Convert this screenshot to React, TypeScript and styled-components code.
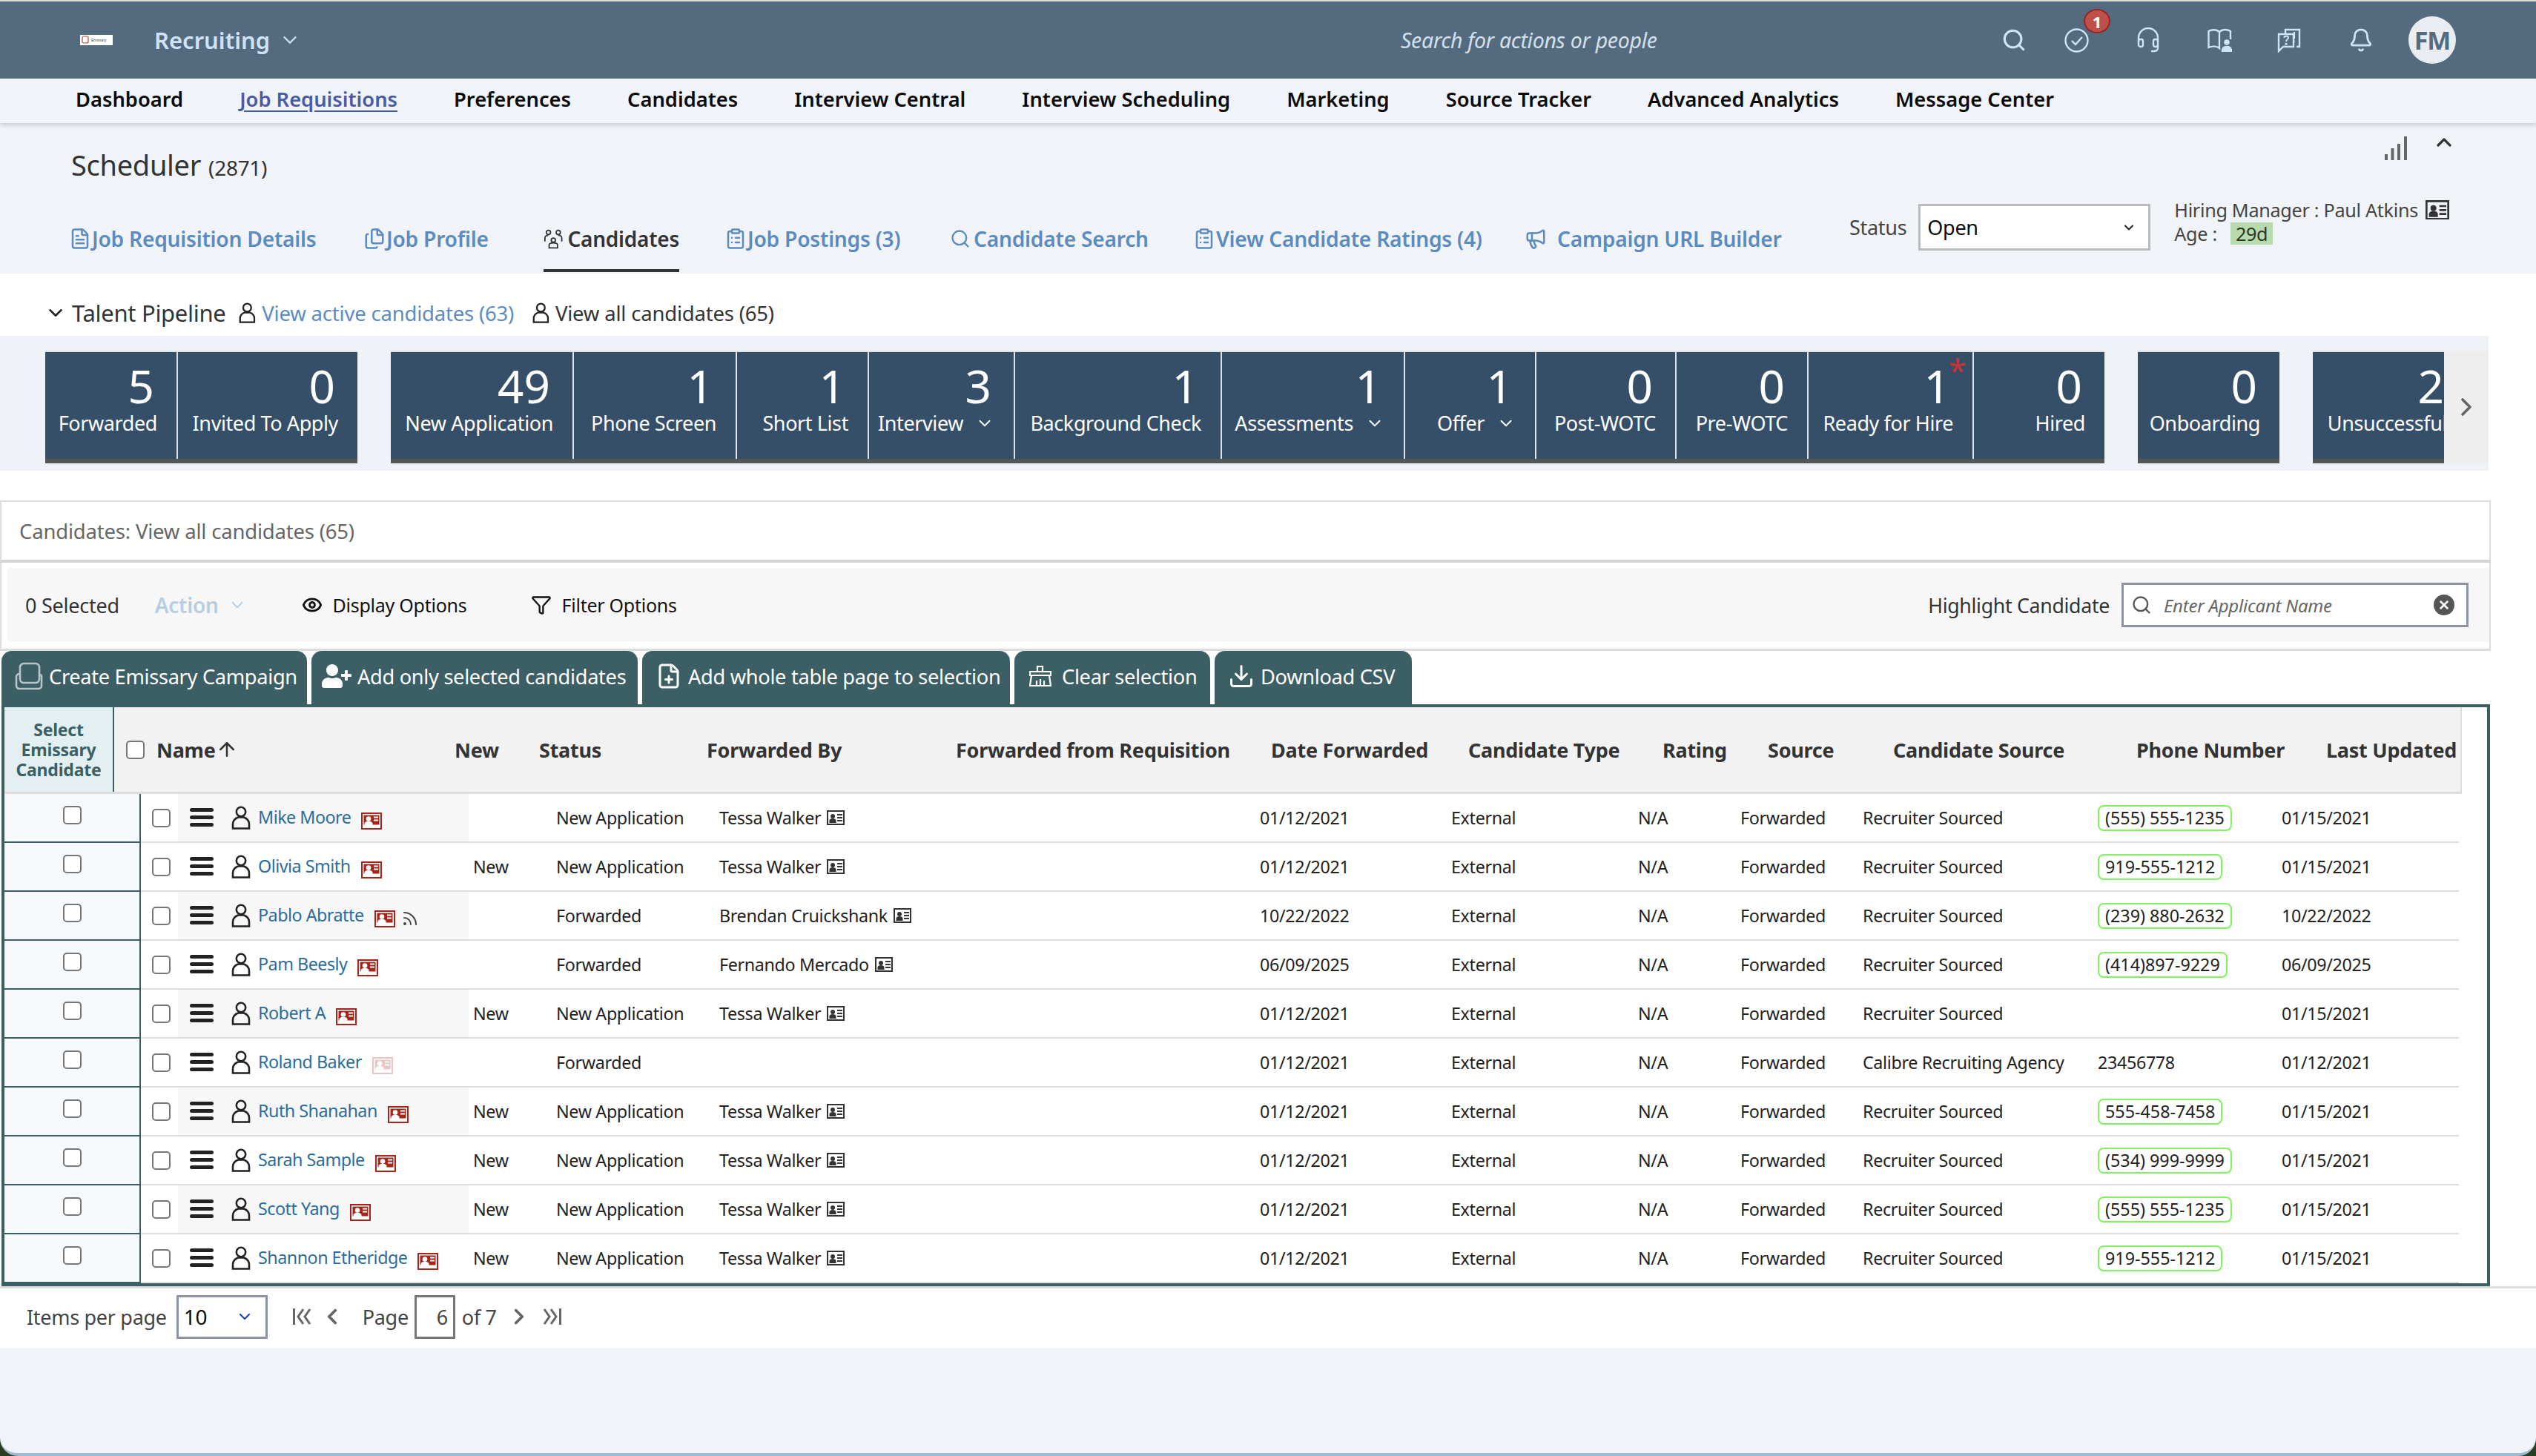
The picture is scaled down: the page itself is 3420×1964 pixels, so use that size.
import React from "react";
import styled, { createGlobalStyle } from "styled-components";
import {
  Search,
  ChevronDown,
  ChevronUp,
  ChevronRight,
  ChevronLeft,
  Bell,
  FileText,
  Files,
  ClipboardList,
  Megaphone,
  Eye,
  Filter,
  Download,
  FilePlus,
  Rss,
  ArrowUp,
  X,
} from "lucide-react";
import { FaUserPlus } from "react-icons/fa";

const FONT = `"Noto Sans", "Open Sans", Arial, sans-serif`;

const GlobalStyle = createGlobalStyle`
  html, body { margin: 0; padding: 0; background: #2c3d22; }
  * { box-sizing: border-box; }
  body { font-family: ${FONT}; }
`;

const Page = styled.div`
  width: 3420px;
  height: 1964px;
  display: flex;
  flex-direction: column;
  background: #f0f3f8;
  border-top: 2px solid #dcdcd4;
  border-bottom: 4px solid #a0bbd3;
  border-radius: 0 0 24px 24px;
  overflow: hidden;
`;

const TopBar = styled.header`
  height: 104px;
  flex: none;
  background: #546a7f;
  display: flex;
  align-items: center;
  padding-left: 108px;
  color: #cfe3f7;
`;

const BrandGroup = styled.div`
  width: 1781px;
  flex: none;
  display: flex;
  align-items: center;
`;

const Logo = styled.svg`
  width: 44px;
  height: 14px;
  margin-right: 56px;
`;

const AppTitle = styled.div`
  font-size: 31px;
  font-weight: 600;
  color: #cfe3f7;
  margin-right: 12px;
`;

const SearchHint = styled.div`
  width: 785px;
  flex: none;
  font-size: 28.5px;
  font-style: italic;
  color: #d3e0ec;
  letter-spacing: -0.3px;
`;

const IconSlot = styled.div<{ $w: number }>`
  width: ${(p) => p.$w}px;
  height: 40px;
  flex: none;
  display: flex;
  align-items: center;
  justify-content: center;
  position: relative;
`;

const Badge = styled.span`
  position: absolute;
  left: 52px;
  top: -22px;
  width: 36px;
  height: 33px;
  border-radius: 50%;
  background: #bf4f4a;
  border: 2px solid #95271f;
  color: #fff;
  font-size: 22px;
  font-weight: 700;
  display: flex;
  align-items: center;
  justify-content: center;
`;

const Avatar = styled.div`
  width: 64px;
  height: 64px;
  border-radius: 50%;
  background: #e9edf1;
  color: #546a7f;
  font-size: 34px;
  font-weight: 700;
  letter-spacing: -1px;
  display: flex;
  align-items: center;
  justify-content: center;
  margin-left: 20px;
`;

const NavBar = styled.nav`
  height: 60px;
  flex: none;
  display: flex;
  align-items: center;
  gap: 76px;
  padding: 0 0 6px 102px;
  background: #f0f3f8;
  box-shadow: 0 3px 5px rgba(90, 100, 120, 0.25);
  position: relative;
`;

const NavLink = styled.a<{ $active?: boolean }>`
  font-size: 27.3px;
  font-weight: 600;
  color: ${(p) => (p.$active ? "#4a5ba6" : "#0a0a0a")};
  text-decoration: ${(p) => (p.$active ? "underline" : "none")};
  text-underline-offset: 5px;
`;

const PageHead = styled.section`
  height: 203px;
  flex: none;
  display: flex;
  flex-direction: column;
  background: #f0f3f8;
`;

const TitleRow = styled.div`
  height: 93px;
  flex: none;
  display: flex;
  justify-content: space-between;
  padding: 18px 108px 0 96px;
`;

const PageTitle = styled.h1`
  margin: 12px 0 0;
  font-size: 38px;
  font-weight: 400;
  color: #333;
  letter-spacing: -0.3px;
  display: flex;
  align-items: baseline;
  gap: 10px;
`;

const PageCount = styled.span`
  font-size: 28px;
`;

const HeadTools = styled.div`
  display: flex;
  gap: 34px;
  align-items: flex-start;
`;

const CollapseIcon = styled(ChevronUp)`
  margin-top: -8px;
`;

const TabsRow = styled.div`
  flex: 1;
  display: flex;
  align-items: flex-start;
  padding-left: 96px;
`;

const Tab = styled.a<{ $w: number; $gap?: number }>`
  width: ${(p) => p.$w}px;
  flex: none;
  height: 108px;
  display: flex;
  align-items: center;
  gap: ${(p) => p.$gap ?? 1}px;
  padding-top: 18px;
  font-size: 28.2px;
  font-weight: 600;
  letter-spacing: -0.25px;
  white-space: nowrap;
  color: #5b8bbf;
  & > svg {
    margin-left: -3px;
  }
`;

const ActiveTab = styled.div`
  width: 183px;
  height: 108px;
  flex: none;
  margin-right: 64px;
  display: flex;
  align-items: center;
  gap: 6px;
  padding-top: 22px;
  font-size: 28px;
  font-weight: 600;
  letter-spacing: -0.25px;
  color: #333;
  border-bottom: 4px solid #333;
`;

const StatusBlock = styled.div`
  display: flex;
  align-items: center;
  height: 63px;
  margin-top: 16px;
  gap: 16px;
  font-size: 27px;
  color: #444;
  letter-spacing: -0.3px;
`;

const StatusSelect = styled.div`
  width: 313px;
  height: 63px;
  background: #fff;
  border: 3px solid #bbb;
  display: flex;
  align-items: center;
  justify-content: space-between;
  padding: 0 16px 0 9px;
  font-size: 27px;
  color: #0a0a0a;
`;

const ManagerBlock = styled.div`
  margin: 8px 0 0 32px;
  display: flex;
  flex-direction: column;
  font-size: 25.2px;
  line-height: 32px;
  color: #444;
  letter-spacing: -0.3px;
`;

const ManagerLine = styled.div`
  display: flex;
  align-items: center;
  gap: 10px;
`;

const AgeTag = styled.span`
  background: #b9d9ae;
  padding: 0 7px;
  height: 30px;
  line-height: 30px;
  margin-left: 8px;
  color: #2b3a26;
`;

const Main = styled.main`
  flex: none;
  display: flex;
  flex-direction: column;
  background: #fff;
`;

const PipelineHead = styled.div`
  height: 84px;
  flex: none;
  display: flex;
  align-items: center;
  padding: 22px 0 0 60px;
  font-size: 27.5px;
  letter-spacing: -0.2px;
  color: #333;
`;

const PipelineTitle = styled.span`
  font-size: 31px;
  margin: 0 18px 0 7px;
  letter-spacing: -0.3px;
`;

const PipelineLink = styled.span<{ $link?: boolean }>`
  color: ${(p) => (p.$link ? "#5b8bbf" : "#333")};
  margin: 0 25px 0 8px;
`;

const PipelineStrip = styled.div`
  width: 3356px;
  height: 182px;
  flex: none;
  background: #eff2f7;
  padding-top: 20px;
  display: flex;
  align-items: flex-start;
`;

const TileScroller = styled.div`
  width: 3296px;
  height: 152px;
  flex: none;
  overflow: hidden;
  display: flex;
  padding-left: 61px;
  gap: 45px;
`;

const TileGroup = styled.div`
  display: flex;
  flex: none;
  height: 152px;
  background: #364f68;
  border-top: 2px solid #dfe3e8;
  border-bottom: 6px solid #555;
`;

const Tile = styled.div<{ $w: number }>`
  width: ${(p) => p.$w}px;
  flex: none;
  position: relative;
  padding: 12px 30px 0 0;
  color: #fff;
  text-align: right;
  border-left: 2px solid #dfe3e8;
  &:first-child {
    border-left: none;
  }
`;

const TileCount = styled.div`
  font-size: 62px;
  line-height: 67px;
`;

const TileLabel = styled.div`
  font-size: 27px;
  line-height: 34px;
  margin-right: -4px;
  letter-spacing: -0.4px;
  white-space: nowrap;
  display: flex;
  justify-content: flex-end;
  align-items: center;
  gap: 16px;
`;

const Asterisk = styled.span`
  position: absolute;
  right: 8px;
  top: 2px;
  color: #c9343a;
  font-size: 44px;
  line-height: 44px;
`;

const ScrollZone = styled.div`
  width: 60px;
  height: 152px;
  background: #eeeeee;
  display: flex;
  align-items: center;
  justify-content: center;
  color: #666;
`;

const ResultHead = styled.div`
  width: 3359px;
  height: 84px;
  margin-top: 40px;
  flex: none;
  display: flex;
  align-items: center;
  padding-left: 24px;
  background: #fff;
  border: 2px solid #ddd;
  border-bottom: 4px solid #d2d2d2;
  font-size: 27.5px;
  color: #666;
  letter-spacing: -0.2px;
`;

const ToolbarWrap = styled.div`
  width: 3359px;
  height: 119px;
  flex: none;
  padding: 7px 0 0 8px;
  border-left: 2px solid #ddd;
  border-right: 2px solid #ddd;
  border-bottom: 3px solid #ddd;
`;

const Toolbar = styled.div`
  height: 100px;
  background: #f7f7f7;
  display: flex;
  align-items: center;
  padding-left: 24px;
  font-size: 25px;
  letter-spacing: -0.25px;
  color: #111;
`;

const ToolbarCount = styled.span`
  color: #333;
  font-size: 27px;
  margin-right: 48px;
`;

const ActionLabel = styled.span`
  color: #b8cde0;
  font-size: 28px;
  font-weight: 600;
  margin-right: 12px;
`;

const ToolbarItem = styled.span<{ $ml: number }>`
  display: flex;
  align-items: center;
  gap: 14px;
  margin-left: ${(p) => p.$ml}px;
`;

const HighlightLabel = styled.span`
  margin-left: auto;
  font-size: 26.7px;
  color: #333;
  letter-spacing: -0.3px;
`;

const HighlightInput = styled.div`
  width: 468px;
  height: 60px;
  margin: 0 28px 0 16px;
  background: #fff;
  border: 3px solid #8a94a6;
  display: flex;
  align-items: center;
  padding: 0 16px 0 10px;
  font-size: 24px;
  font-style: italic;
  color: #666;
  gap: 16px;
`;

const ClearDot = styled.span`
  width: 28px;
  height: 28px;
  margin-left: auto;
  border-radius: 50%;
  background: #555;
  color: #fff;
  display: flex;
  align-items: center;
  justify-content: center;
`;

const ActionTabs = styled.div`
  height: 72px;
  flex: none;
  display: flex;
  gap: 6px;
  padding-left: 2px;
`;

const ActionTab = styled.button<{ $w: number; $pad: number; $gap?: number }>`
  width: ${(p) => p.$w}px;
  height: 72px;
  border: none;
  border-radius: 14px 14px 0 0;
  background: #3c5f66;
  color: #fff;
  font-family: ${FONT};
  font-size: 27.2px;
  letter-spacing: -0.3px;
  white-space: nowrap;
  padding: 0 0 4px ${(p) => p.$pad}px;
  display: flex;
  align-items: center;
  gap: ${(p) => p.$gap ?? 8}px;
`;

const TableFrame = styled.div`
  width: 3356px;
  height: 785px;
  margin-left: 2px;
  flex: none;
  border: 4px solid #3c5f66;
`;

const HeaderRow = styled.div`
  width: 3314px;
  height: 117px;
  background: #f2f2f2;
  border-bottom: 3px solid #ddd;
  border-right: 2px solid #ddd;
  display: grid;
  grid-template-columns: 148px 57px 402px 114px 226px 336px 425px 266px 262px 142px 169px 328px 256px 183px;
  align-items: center;
  font-size: 27px;
  font-weight: 700;
  color: #333;
  letter-spacing: -0.25px;
  white-space: nowrap;
`;

const SelectHead = styled.div`
  height: 114px;
  background: #e4eff2;
  border-right: 2px solid #3c5f66;
  color: #3c5f66;
  font-size: 23px;
  line-height: 27px;
  text-align: center;
  display: flex;
  flex-direction: column;
  justify-content: center;
  letter-spacing: -0.2px;
`;

const Box = styled.span`
  width: 25px;
  height: 25px;
  display: block;
  background: #fff;
  border: 2px solid #777;
  border-radius: 5px;
`;

const HeadBox = styled(Box)`
  margin-left: 16px;
`;

const NameHead = styled.div`
  display: flex;
  align-items: center;
  gap: 0;
`;

const Row = styled.div`
  width: 3310px;
  height: 66px;
  border-bottom: 2px solid #ddd;
  display: grid;
  grid-template-columns: 184px 50px 392px 118px 220px 729px 258px 252px 138px 165px 317px 248px 239px;
  align-items: center;
  font-size: 23.3px;
  color: #222;
  letter-spacing: -0.35px;
`;

const SelectCell = styled.div`
  height: 66px;
  margin-bottom: -2px;
  background: #f5f9fb;
  border-right: 2px solid #3c5f66;
  border-bottom: 2px solid #3c5f66;
  display: flex;
  justify-content: center;
  padding-top: 16px;
`;

const CheckCell = styled.div`
  display: flex;
  justify-content: center;
  padding-left: 5px;
`;

const NameCell = styled.div<{ $shade: boolean }>`
  height: 64px;
  display: flex;
  align-items: center;
  padding-left: 16px;
  background: ${(p) => (p.$shade ? "#f7f7f7" : "#fff")};
`;

const RowMenu = styled.div`
  width: 32px;
  flex: none;
  display: flex;
  flex-direction: column;
  gap: 5px;
  margin-right: 24px;
  margin-top: -2px;
`;

const RowMenuBar = styled.span`
  height: 5px;
  border-radius: 3px;
  background: #222;
`;

const NameLink = styled.a`
  margin: -2px 14px 0 10px;
  color: #2b6c9e;
  white-space: nowrap;
  letter-spacing: -0.5px;
`;

const RssMark = styled(Rss)`
  margin: 8px 0 0 8px;
`;

const CardSvg = styled.svg<{ $faded?: boolean }>`
  flex: none;
  margin-top: 8px;
  opacity: ${(p) => (p.$faded ? 0.25 : 1)};
`;

const NewCell = styled.div`
  padding-left: 6px;
`;

const ForwardedCell = styled.div`
  display: flex;
  align-items: center;
  gap: 8px;
`;

const PhonePill = styled.span`
  display: inline-block;
  border: 2px solid #7ff35f;
  border-radius: 8px;
  height: 35px;
  line-height: 30px;
  padding: 0 8px;
  letter-spacing: 0;
`;

const Pager = styled.div`
  height: 83px;
  width: 3420px;
  flex: none;
  border-top: 3px solid #ddd;
  display: flex;
  align-items: center;
  padding: 0 0 4px 36px;
  font-size: 27px;
  color: #444;
  letter-spacing: -0.3px;
`;

const PageSize = styled.div`
  width: 123px;
  height: 59px;
  margin-left: 13px;
  border: 3px solid #8a94a6;
  display: flex;
  align-items: center;
  justify-content: space-between;
  padding: 0 16px 0 7px;
  font-size: 28px;
  color: #0a0a0a;
`;

const PageButton = styled.span<{ $ml: number }>`
  margin-left: ${(p) => p.$ml}px;
  display: flex;
  color: #666;
`;

const PageWord = styled.span`
  margin-left: 24px;
`;

const PageInput = styled.div`
  width: 55px;
  height: 59px;
  margin: 0 9px 0 8px;
  border: 3px solid #777;
  display: flex;
  align-items: center;
  justify-content: flex-end;
  padding-right: 7px;
`;

function PersonIcon({ size = 32, color = "#222" }: { size?: number; color?: string }) {
  return (
    <svg width={(size * 26) / 32} height={size} viewBox="0 0 26 32" fill="none" stroke={color} strokeWidth="2.6">
      <circle cx="13" cy="8" r="6.2" />
      <path d="M2 30.5H24V24.5C24 19.5 19.5 16.5 17 15.5H9C6.5 16.5 2 19.5 2 24.5Z" />
    </svg>
  );
}

function CardIcon({ faded }: { faded?: boolean }) {
  return (
    <CardSvg $faded={faded} width="28" height="23" viewBox="0 0 28 23">
      <rect width="28" height="23" fill="#a92418" />
      <path d="M2 2h24v19H2zM3.500 3.500v13h21v-13z" fill="#fff" fillRule="evenodd" />
      <circle cx="10" cy="8.500" r="3.300" fill="#fff" />
      <path d="M4.500 17.500V15c0-2 2.500-3.300 5.500-3.300s5.500 1.300 5.500 3.300v2.500z" fill="#fff" />
      <path d="M17 5.500h6v2h-6zM17 9.500h6v2h-6z" fill="#fff" />
    </CardSvg>
  );
}

function ContactIcon({ size = 24 }: { size?: number }) {
  return (
    <svg width={size} height={(size * 20) / 24} viewBox="0 0 24 20" fill="#333">
      <path d="M0 0h24v20H0zM2 2v16h20V2z" fillRule="evenodd" />
      <circle cx="8" cy="8" r="3" />
      <path d="M3.500 17v-3c0-2 2-3 4.500-3s4.500 1 4.500 3v3z" />
      <path d="M14 5h7v2h-7zM14 9h7v2h-7zM14 13h7v2h-7z" />
    </svg>
  );
}

const topIcon = { fill: "none", stroke: "#cfe3f7", strokeWidth: 2.4 };

function HeadsetIcon() {
  return (
    <svg width="30" height="34" viewBox="0 0 30 34" {...topIcon}>
      <path d="M2 20V14a13 13 0 0 1 26 0v6" />
      <rect x="2" y="16" width="6" height="10" rx="2.500" />
      <rect x="22" y="16" width="6" height="10" rx="2.500" />
      <path d="M28 24v4c0 3-3 4-5 4h-4" />
    </svg>
  );
}

function BookPersonIcon() {
  return (
    <svg width="33" height="32" viewBox="0 0 33 32" {...topIcon}>
      <path d="M16 27C12 24 6 24 1.500 26V4C6 1.500 12 1.500 16 5V27Z" />
      <path d="M16 5C20 1.500 26 1.500 31 4V15" />
      <circle cx="26" cy="19" r="2.600" fill="#cfe3f7" />
      <path d="M20 31c0-4 2.500-6 6-6s6 2 6 6z" fill="#cfe3f7" />
    </svg>
  );
}

function ChatHelpIcon() {
  return (
    <svg width="32" height="34" viewBox="0 0 32 34" {...topIcon}>
      <path d="M11 8V3H30V26H26" />
      <path d="M2 9H22V26H8L2 32Z" />
      <path d="M9 14c1-3 6-3 6 0 0 2-3 2-3 5" strokeWidth="2" />
      <circle cx="12" cy="22.500" r="0.600" />
      <path d="M23 6v9M23 18v1" strokeWidth="2.200" />
    </svg>
  );
}

function BroomIcon() {
  return (
    <svg width="30" height="30" viewBox="0 0 30 30" fill="none" stroke="#fff" strokeWidth="2.200">
      <path d="M11 9V2h7v7" />
      <path d="M1 14V9h28v5z" />
      <path d="M3 14L1 28H29L27 14" />
      <path d="M10 28V21M15 28V19M20 28V21" />
    </svg>
  );
}

function CampaignIcon() {
  return (
    <svg width="38" height="38" viewBox="0 0 38 38" fill="none" stroke="#b8c4c8" strokeWidth="2.600">
      <rect x="2" y="16" width="34" height="20" rx="4" />
      <rect x="7" y="2" width="26" height="26" rx="5" fill="#3c5f66" />
    </svg>
  );
}

function TeamIcon() {
  return (
    <svg width="28" height="28" viewBox="0 0 28 28" fill="none" stroke="#333" strokeWidth="1.900">
      <circle cx="7" cy="5" r="3" />
      <circle cx="21" cy="5" r="3" />
      <circle cx="14" cy="16" r="3" />
      <path d="M2 18V13c0-3 3-4 5-4M26 18V13c0-3-3-4-5-4" />
      <path d="M8 27V23c0-2 3-3 6-3s6 1 6 3v4z" />
    </svg>
  );
}

function BarsIcon() {
  return (
    <svg width="30" height="32" viewBox="0 0 30 32" fill="#666">
      <rect x="0" y="24" width="4" height="8" />
      <rect x="8.500" y="16" width="4" height="16" />
      <rect x="17" y="10" width="4" height="22" />
      <rect x="26" y="0" width="4" height="32" />
    </svg>
  );
}

function EdgeIcon({ last }: { last?: boolean }) {
  return (
    <svg width="26" height="34" viewBox="0 0 26 34" fill="none" stroke="currentColor" strokeWidth="3">
      {last ? (
        <path d="M3 7l7 10-7 10M12 7l7 10-7 10M24.500 6v22" />
      ) : (
        <path d="M1.500 6v22M14 7l-7 10 7 10M23 7l-7 10 7 10" />
      )}
    </svg>
  );
}

type Cand = {
  name: string;
  isNew?: boolean;
  status: string;
  by?: string;
  date: string;
  source?: string;
  phone?: string;
  plainPhone?: string;
  updated: string;
  faded?: boolean;
  rss?: boolean;
};

const rows: Cand[] = [
  { name: "Mike Moore", status: "New Application", by: "Tessa Walker", date: "01/12/2021", phone: "(555) 555-1235", updated: "01/15/2021" },
  { name: "Olivia Smith", isNew: true, status: "New Application", by: "Tessa Walker", date: "01/12/2021", phone: "919-555-1212", updated: "01/15/2021" },
  { name: "Pablo Abratte", status: "Forwarded", by: "Brendan Cruickshank", date: "10/22/2022", phone: "(239) 880-2632", updated: "10/22/2022", rss: true },
  { name: "Pam Beesly", status: "Forwarded", by: "Fernando Mercado", date: "06/09/2025", phone: "(414)897-9229", updated: "06/09/2025" },
  { name: "Robert A", isNew: true, status: "New Application", by: "Tessa Walker", date: "01/12/2021", updated: "01/15/2021" },
  { name: "Roland Baker", status: "Forwarded", date: "01/12/2021", source: "Calibre Recruiting Agency", plainPhone: "23456778", updated: "01/12/2021", faded: true },
  { name: "Ruth Shanahan", isNew: true, status: "New Application", by: "Tessa Walker", date: "01/12/2021", phone: "555-458-7458", updated: "01/15/2021" },
  { name: "Sarah Sample", isNew: true, status: "New Application", by: "Tessa Walker", date: "01/12/2021", phone: "(534) 999-9999", updated: "01/15/2021" },
  { name: "Scott Yang", isNew: true, status: "New Application", by: "Tessa Walker", date: "01/12/2021", phone: "(555) 555-1235", updated: "01/15/2021" },
  { name: "Shannon Etheridge", isNew: true, status: "New Application", by: "Tessa Walker", date: "01/12/2021", phone: "919-555-1212", updated: "01/15/2021" },
];

type TileData = { count: number; label: string; w: number; caret?: boolean; star?: boolean };

const tileGroups: TileData[][] = [
  [
    { count: 5, label: "Forwarded", w: 177 },
    { count: 0, label: "Invited To Apply", w: 244 },
  ],
  [
    { count: 49, label: "New Application", w: 245 },
    { count: 1, label: "Phone Screen", w: 220 },
    { count: 1, label: "Short List", w: 178 },
    { count: 3, label: "Interview", w: 197, caret: true },
    { count: 1, label: "Background Check", w: 279 },
    { count: 1, label: "Assessments", w: 247, caret: true },
    { count: 1, label: "Offer", w: 177, caret: true },
    { count: 0, label: "Post-WOTC", w: 189 },
    { count: 0, label: "Pre-WOTC", w: 178 },
    { count: 1, label: "Ready for Hire", w: 223, star: true },
    { count: 0, label: "Hired", w: 178 },
  ],
  [{ count: 0, label: "Onboarding", w: 191 }],
  [{ count: 2, label: "Unsuccessful", w: 207 }],
];

const navItems = [
  "Dashboard",
  "Job Requisitions",
  "Preferences",
  "Candidates",
  "Interview Central",
  "Interview Scheduling",
  "Marketing",
  "Source Tracker",
  "Advanced Analytics",
  "Message Center",
];

const heads = ["New", "Status", "Forwarded By", "Forwarded from Requisition", "Date Forwarded", "Candidate Type", "Rating", "Source", "Candidate Source", "Phone Number", "Last Updated"];

const tabColor = "#5b8bbf";

export default function App() {
  return (
    <Page>
      <GlobalStyle />
      <TopBar>
        <BrandGroup>
          <Logo viewBox="0 0 44 14">
            <rect width="44" height="14" fill="#fff" />
            <rect x="3" y="2" width="8" height="9" rx="2" fill="none" stroke="#b5433f" strokeWidth="1.200" />
            <text x="15" y="9" fontSize="5" fill="#444" fontFamily="Liberation Sans, sans-serif">Emissary</text>
          </Logo>
          <AppTitle>Recruiting</AppTitle>
          <ChevronDown size={30} strokeWidth={1.8} color="#cfe3f7" />
        </BrandGroup>
        <SearchHint>Search for actions or people</SearchHint>
        <IconSlot $w={84}>
          <Search size={34} strokeWidth={2.2} color="#cfe3f7" />
        </IconSlot>
        <IconSlot $w={84}>
          <svg width="33" height="33" viewBox="0 0 33 33" {...topIcon}>
            <circle cx="16.500" cy="16.500" r="15" />
            <path d="M10 17l5 5 9-10" />
          </svg>
          <Badge>1</Badge>
        </IconSlot>
        <IconSlot $w={110}><HeadsetIcon /></IconSlot>
        <IconSlot $w={82}><BookPersonIcon /></IconSlot>
        <IconSlot $w={106}><ChatHelpIcon /></IconSlot>
        <IconSlot $w={88}>
          <Bell size={34} strokeWidth={2} color="#cfe3f7" />
        </IconSlot>
        <Avatar>FM</Avatar>
      </TopBar>

      <NavBar>
        {navItems.map((item) => (
          <NavLink key={item} $active={item === "Job Requisitions"}>{item}</NavLink>
        ))}
      </NavBar>

      <PageHead>
        <TitleRow>
          <PageTitle>
            Scheduler <PageCount>(2871)</PageCount>
          </PageTitle>
          <HeadTools>
            <BarsIcon />
            <CollapseIcon size={32} strokeWidth={2.4} color="#333" />
          </HeadTools>
        </TitleRow>
        <TabsRow>
          <Tab $w={397}><FileText size={30} color={tabColor} />Job Requisition Details</Tab>
          <Tab $w={240}><Files size={30} color={tabColor} />Job Profile</Tab>
          <ActiveTab><TeamIcon />Candidates</ActiveTab>
          <Tab $w={304}><ClipboardList size={30} color={tabColor} />Job Postings (3)</Tab>
          <Tab $w={328} $gap={4}><Search size={28} color={tabColor} />Candidate Search</Tab>
          <Tab $w={447}><ClipboardList size={30} color={tabColor} />View Candidate Ratings (4)</Tab>
          <Tab $w={435} $gap={14}><Megaphone size={30} color={tabColor} />Campaign URL Builder</Tab>
          <StatusBlock>
            Status
            <StatusSelect>
              Open
              <ChevronDown size={20} strokeWidth={2.4} color="#222" />
            </StatusSelect>
          </StatusBlock>
          <ManagerBlock>
            <ManagerLine>Hiring Manager&nbsp;:&nbsp;Paul Atkins <ContactIcon size={32} /></ManagerLine>
            <ManagerLine>Age :<AgeTag>29d</AgeTag></ManagerLine>
          </ManagerBlock>
        </TabsRow>
      </PageHead>

      <Main>
        <PipelineHead>
          <ChevronDown size={30} strokeWidth={2} color="#222" />
          <PipelineTitle>Talent Pipeline</PipelineTitle>
          <PersonIcon size={28} />
          <PipelineLink $link>View active candidates (63)</PipelineLink>
          <PersonIcon size={28} />
          <PipelineLink>View all candidates (65)</PipelineLink>
        </PipelineHead>

        <PipelineStrip>
          <TileScroller>
            {tileGroups.map((group, i) => (
              <TileGroup key={i}>
                {group.map((tile) => (
                  <Tile key={tile.label} $w={tile.w}>
                    <TileCount>{tile.count}</TileCount>
                    <TileLabel>
                      {tile.label}
                      {tile.caret && <ChevronDown size={26} strokeWidth={1.8} />}
                    </TileLabel>
                    {tile.star && <Asterisk>*</Asterisk>}
                  </Tile>
                ))}
              </TileGroup>
            ))}
          </TileScroller>
          <ScrollZone>
            <ChevronRight size={40} strokeWidth={2.2} />
          </ScrollZone>
        </PipelineStrip>

        <ResultHead>Candidates: View all candidates (65)</ResultHead>

        <ToolbarWrap>
          <Toolbar>
            <ToolbarCount>0 Selected</ToolbarCount>
            <ActionLabel>Action</ActionLabel>
            <ChevronDown size={26} strokeWidth={1.8} color="#b8cde0" />
            <ToolbarItem $ml={74}><Eye size={28} strokeWidth={2.4} />Display Options</ToolbarItem>
            <ToolbarItem $ml={86}><Filter size={28} strokeWidth={2} />Filter Options</ToolbarItem>
            <HighlightLabel>Highlight Candidate</HighlightLabel>
            <HighlightInput>
              <Search size={28} strokeWidth={2} color="#555" />
              Enter Applicant Name
              <ClearDot><X size={18} strokeWidth={3.4} /></ClearDot>
            </HighlightInput>
          </Toolbar>
        </ToolbarWrap>

        <ActionTabs>
          <ActionTab $w={412} $pad={18}><CampaignIcon />Create Emissary Campaign</ActionTab>
          <ActionTab $w={440} $pad={14}><FaUserPlus size={40} />Add only selected candidates</ActionTab>
          <ActionTab $w={496} $pad={18}><FilePlus size={36} strokeWidth={2} />Add whole table page to selection</ActionTab>
          <ActionTab $w={264} $pad={20} $gap={14}><BroomIcon />Clear selection</ActionTab>
          <ActionTab $w={266} $pad={18}><Download size={36} strokeWidth={2} />Download CSV</ActionTab>
        </ActionTabs>

        <TableFrame>
          <HeaderRow>
            <SelectHead>
              <span>Select</span>
              <span>Emissary</span>
              <span>Candidate</span>
            </SelectHead>
            <HeadBox />
            <NameHead>
              Name
              <ArrowUp size={30} strokeWidth={2} />
            </NameHead>
            {heads.map((h) => (
              <div key={h}>{h}</div>
            ))}
          </HeaderRow>

          {rows.map((c, i) => (
            <Row key={c.name}>
              <SelectCell><Box /></SelectCell>
              <CheckCell><Box /></CheckCell>
              <NameCell $shade={i % 2 === 0}>
                <RowMenu>
                  <RowMenuBar />
                  <RowMenuBar />
                  <RowMenuBar />
                </RowMenu>
                <PersonIcon />
                <NameLink>{c.name}</NameLink>
                <CardIcon faded={c.faded} />
                {c.rss && <RssMark size={24} color="#444" />}
              </NameCell>
              <NewCell>{c.isNew ? "New" : ""}</NewCell>
              <div>{c.status}</div>
              <ForwardedCell>
                {c.by && (
                  <>
                    {c.by}
                    <ContactIcon />
                  </>
                )}
              </ForwardedCell>
              <div>{c.date}</div>
              <div>External</div>
              <div>N/A</div>
              <div>Forwarded</div>
              <div>{c.source ?? "Recruiter Sourced"}</div>
              <div>
                {c.phone && <PhonePill>{c.phone}</PhonePill>}
                {c.plainPhone}
              </div>
              <div>{c.updated}</div>
            </Row>
          ))}
        </TableFrame>

        <Pager>
          Items per page
          <PageSize>
            10
            <ChevronDown size={24} strokeWidth={2.2} color="#2a4aa0" />
          </PageSize>
          <PageButton $ml={34}><EdgeIcon /></PageButton>
          <PageButton $ml={10}><ChevronLeft size={34} strokeWidth={2.6} /></PageButton>
          <PageWord>Page</PageWord>
          <PageInput>6</PageInput>
          of 7
          <PageButton $ml={13}><ChevronRight size={34} strokeWidth={2.6} /></PageButton>
          <PageButton $ml={14}><EdgeIcon last /></PageButton>
        </Pager>
      </Main>
    </Page>
  );
}
